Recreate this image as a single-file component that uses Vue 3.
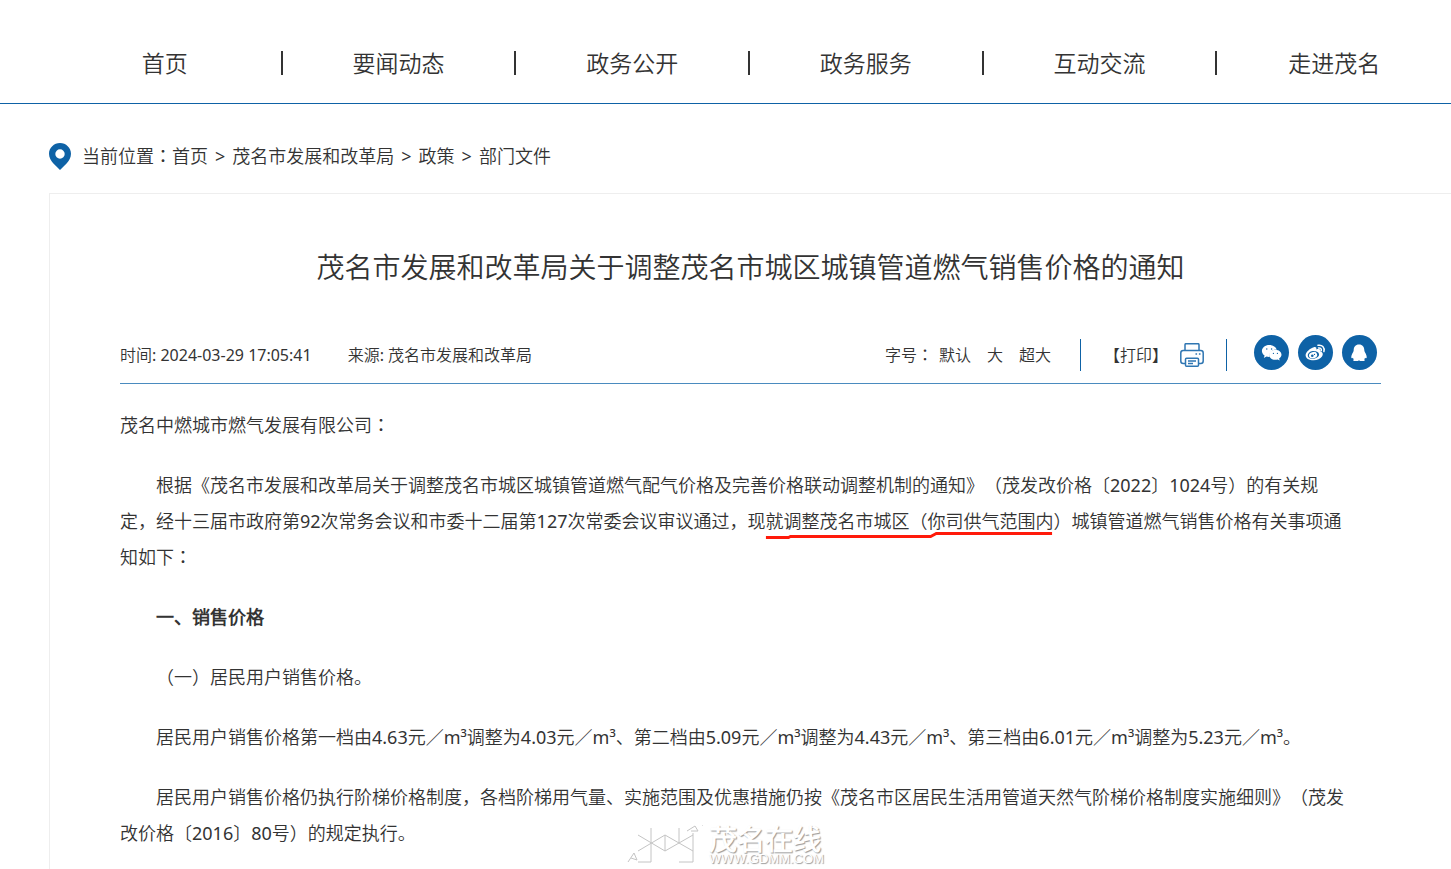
<script setup>
import { ref } from "vue";

const navList = ["首页", "要闻动态", "政务公开", "政务服务", "互动交流", "走进茂名"];
const crumbs = ["首页", "茂名市发展和改革局", "政策", "部门文件"];

// 字號切換
const sizes = [
  { label: "默认", cls: "" },
  { label: "大", cls: "big" },
  { label: "超大", cls: "huge" },
];
const sizeCls = ref("");

const printPage = () => window.print();
</script>

<template>
  <div class="page">
    <nav class="nav">
      <a v-for="n in navList" :key="n" href="#">{{ n }}</a>
    </nav>

    <div class="crumbs">
      <svg class="pin" viewBox="0 0 22 27">
        <path
          fill-rule="evenodd"
          d="M11 0C5 0 0 4.8 0 10.8c0 4 2 6.800 4.200 9.400L11 27l6.800-6.800C20 17.600 22 14.800 22 10.800 22 4.800 17 0 11 0zm0 6.300a4.700 4.700 0 1 1 0 9.400 4.700 4.700 0 0 1 0-9.400z"
        />
      </svg>
      <span>当前位置<span class="mid">：</span></span>
      <template v-for="(c, i) in crumbs" :key="c">
        <span v-if="i > 0" class="gt">&gt;</span>
        <a href="#">{{ c }}</a>
      </template>
    </div>

    <main class="article">
      <h1>茂名市发展和改革局关于调整茂名市城区城镇管道燃气销售价格的通知</h1>

      <div class="meta">
        <span class="time">时间: 2024-03-29 17:05:41</span>
        <span>来源: 茂名市发展和改革局</span>
        <div class="tools">
          <span class="label">字号<span class="mid">：</span></span>
          <div class="sizes">
            <button
              v-for="s in sizes"
              :key="s.label"
              type="button"
              @click="sizeCls = s.cls"
            >
              {{ s.label }}
            </button>
          </div>
          <button class="print" type="button" @click="printPage">
            【打印】
            <svg viewBox="0 0 24 24">
              <path d="M5 7.500V1.700q0-1 1-1h12q1 0 1 1v5.800" />
              <path
                d="M5 20.500H3.200Q.8 20.500.8 18V10q0-2.500 2.400-2.500h17.600q2.400 0 2.400 2.500v8q0 2.500-2.400 2.500H19"
              />
              <path d="M6.500 15.200h11q1 0 1 1v6q0 1-1 1h-11q-1 0-1-1v-6q0-1 1-1z" />
              <path d="M8 18h8M8 20.600h5M15.500 11h1.600M18.900 11h1.600" />
            </svg>
          </button>
          <div class="share">
            <a href="#" aria-label="微信">
              <svg viewBox="0 0 35 35">
                <path
                  class="w"
                  d="M15.300 10c-4.200 0-7.400 2.700-7.400 6 0 1.900 1.100 3.500 2.700 4.600l-.8 2.300 2.700-1.400c1 .3 1.900.5 3.100.4-.9-4.200 2.500-7.500 7.100-7.400-.8-2.700-3.900-4.500-7.400-4.500z"
                />
                <path
                  class="w"
                  d="M21.300 14.800c-3.700 0-6.200 2.300-6.200 5s2.500 5 6.200 5c.8 0 1.600-.2 2.300-.4l2.100 1.200-.6-2c1.500-1 2.400-2.300 2.400-3.800 0-2.800-2.700-5-6.200-5z"
                />
                <g class="b">
                  <circle cx="12.800" cy="14" r=".7" />
                  <circle cx="17.600" cy="14" r=".7" />
                  <circle cx="19.400" cy="18.400" r=".6" />
                  <circle cx="23.400" cy="18.400" r=".6" />
                </g>
              </svg>
            </a>
            <a href="#" aria-label="微博">
              <svg viewBox="0 0 35 35">
                <path
                  class="w"
                  d="M15.800 12.200c1.800-.6 3 .2 2.500 2.200 2.600-1 4.800-.5 4.200 2 2.500.8 2.900 2.900 1.500 5-1.600 2.300-4.700 3.900-8.400 3.900-4.600 0-8-2.100-8-5.100 0-3.300 4.700-7 8.200-8z"
                />
                <ellipse class="b" cx="15.400" cy="20" rx="5.700" ry="3.900" transform="rotate(-8 15 20)" />
                <ellipse class="w" cx="15" cy="20.200" rx="4.200" ry="3.200" transform="rotate(-18 15 20)" />
                <circle class="b" cx="14.300" cy="20.700" r="1.300" />
                <circle class="b" cx="16.500" cy="19.400" r=".6" />
                <path class="wave" d="M20 10.300c4-.8 7 2 5.900 6.300M20.500 13c1.900-.3 3.200.9 2.800 2.700" />
              </svg>
            </a>
            <a href="#" aria-label="QQ">
              <svg viewBox="0 0 35 35">
                <path
                  class="w"
                  d="M17 9.500c-3.600 0-5.300 2.500-5.300 5.500 0 .8-.2 1.400-.5 2-1.300 2-2 4-1.900 5.600 0 .8.900.9 1.600.1.200.6.400 1 .9 1.500-1 .8-.6 1.800 1 1.800h2.600c.7 0 .9-.5 1.600-.5s.9.500 1.600.5h2.600c1.600 0 2-1 1-1.800.5-.5.7-.9.9-1.500.7.8 1.600.7 1.600-.1.100-1.600-.6-3.600-1.900-5.600-.3-.6-.5-1.200-.5-2 0-3-1.700-5.500-5.300-5.500z"
                />
              </svg>
            </a>
          </div>
        </div>
      </div>

      <div class="content" :class="sizeCls">
        <p class="to">茂名中燃城市燃气发展有限公司<span class="mid">：</span></p>
        <p>
          根据《茂名市发展和改革局关于调整茂名市城区城镇管道燃气配气价格及完善价格联动调整机制的通知》（茂发改价格〔2022〕1024号）的有关规定，经十三届市政府第92次常务会议和市委十二届第127次常委会议审议通过，现<span
            class="mark"
            >就调整茂名市城区（你司供气范围内<svg
              viewBox="0 0 306 8"
              preserveAspectRatio="none"
            >
              <path d="M1 6.500H25L27 5.500H176L182 2.500H305" /></svg></span
          >）城镇管道燃气销售价格有关事项通知如下<span class="mid">：</span>
        </p>
        <p><strong>一、销售价格</strong></p>
        <p>（一）居民用户销售价格。</p>
        <p>
          居民用户销售价格第一档由4.63元／m³调整为4.03元／m³、第二档由5.09元／m³调整为4.43元／m³、第三档由6.01元／m³调整为5.23元／m³。
        </p>
        <p>
          居民用户销售价格仍执行阶梯价格制度，各档阶梯用气量、实施范围及优惠措施仍按《茂名市区居民生活用管道天然气阶梯价格制度实施细则》（茂发改价格〔2016〕80号）的规定执行。
        </p>
      </div>
    </main>

    <!-- 浮水印 -->
    <div class="watermark">
      <svg viewBox="0 0 76 40">
        <path
          d="M11 10L38 26M11 26L38 10M24 3V37M11 37H24M38 10V26M38 26L66 10M38 10L66 26M52 3V18M66 8V37M52 37H66M1 37L7 28L10 35L4 33M60 6L68 1L71 6H64M75 0H76"
        />
      </svg>
      <div class="wm-text">
        <b>茂名在线</b>
        <span>WWW.GDMM.COM</span>
      </div>
    </div>
  </div>
</template>

<style>
body {
  margin: 0;
  background: #fff;
}
</style>

<style scoped>
.page {
  position: relative;
  display: flex;
  flex-direction: column;
  min-height: 100vh;
  color: #333;
  font-family: "Noto Sans", "Noto Sans CJK SC DemiLight", "Noto Sans CJK SC",
    sans-serif;
  font-weight: 400;
  text-spacing-trim: space-all;
}

a {
  color: inherit;
  text-decoration: none;
}

button {
  padding: 0;
  border: 0;
  background: none;
  color: inherit;
  font: inherit;
  cursor: pointer;
}

/* 冒號置中 */
.mid {
  font-family: "Noto Sans CJK TC", sans-serif;
  line-height: 1;
}

.nav {
  display: grid;
  grid-template-columns: repeat(6, 1fr);
  padding: 51px 0 28px 49px;
  border-bottom: 1px solid #0e62a6;
}

.nav a {
  font-size: 23px;
  line-height: 24px;
  text-align: center;
  border-right: 2px solid #333;
}

.nav a:last-child {
  border-right: 0;
}

.crumbs {
  display: flex;
  align-items: center;
  padding: 38px 0 23px 49px;
  font-size: 18px;
  line-height: 28px;
}

.pin {
  width: 22px;
  height: 27px;
  margin-right: 11px;
  fill: #0e62a6;
}

.gt {
  margin: 0 7px;
}

.article {
  flex: 1;
  margin-left: 49px;
  padding: 53px 70px 0;
  border-top: 1px solid #eee;
  border-left: 1px solid #eee;
}

h1 {
  margin: 0 0 48px;
  font-size: 28px;
  font-weight: 400;
  line-height: 40px;
  text-align: center;
}

.meta {
  display: flex;
  align-items: center;
  padding-bottom: 9px;
  border-bottom: 1px solid #4a8bbf;
  font-size: 16px;
  line-height: 32px;
}

.time {
  margin-right: 36px;
}

.tools {
  display: flex;
  align-items: center;
  margin-left: auto;
}

.label {
  margin-right: 6px;
}

.sizes {
  display: flex;
  gap: 16px;
}

.print {
  display: flex;
  align-items: center;
  gap: 12px;
  margin: 0 27px 0 29px;
  padding: 0 22px 0 23px;
  border-left: 1px solid #0e62a6;
  border-right: 1px solid #0e62a6;
}

.print svg {
  width: 24px;
  height: 24px;
  fill: none;
  stroke: #2f76b2;
  stroke-width: 1.5;
}

.share {
  display: flex;
  gap: 9px;
  padding: 0 4px 4px 0;
}

.share a {
  width: 35px;
  height: 35px;
  border-radius: 50%;
  background: #0e62a6;
}

.share svg {
  display: block;
}

.w {
  fill: #fff;
}

.b {
  fill: #0e62a6;
}

.wave {
  fill: none;
  stroke: #fff;
  stroke-width: 1.5;
  stroke-linecap: round;
}

.content {
  padding: 23px 35px 0 0;
  font-size: 18px;
  line-height: 36px;
}

.content.big {
  font-size: 20px;
}

.content.huge {
  font-size: 24px;
}

.content p {
  margin: 0 0 24px;
  text-indent: 2em;
}

.content p:last-child {
  margin-bottom: 0;
}

.content .to {
  text-indent: 0;
}

strong {
  font-weight: 700;
}

.mark {
  position: relative;
}

.mark svg {
  position: absolute;
  left: 0;
  bottom: -6px;
  width: 100%;
  height: 8px;
  fill: none;
  stroke: #ff1a0a;
  stroke-width: 3;
}

.watermark {
  position: absolute;
  right: 0;
  bottom: 4px;
  left: 0;
  display: flex;
  justify-content: center;
  gap: 6px;
  pointer-events: none;
}

.watermark svg {
  width: 76px;
  height: 40px;
  fill: none;
  stroke: #c4c4c4;
}

.wm-text {
  display: flex;
  flex-direction: column;
  color: #fff;
  text-shadow: 1px 1px 1px #999;
}

.wm-text b {
  font-size: 28px;
  font-weight: 700;
  line-height: 28px;
}

.wm-text span {
  font-family: "Liberation Sans", sans-serif;
  font-size: 13px;
  font-weight: 400;
  line-height: 12px;
}
</style>
